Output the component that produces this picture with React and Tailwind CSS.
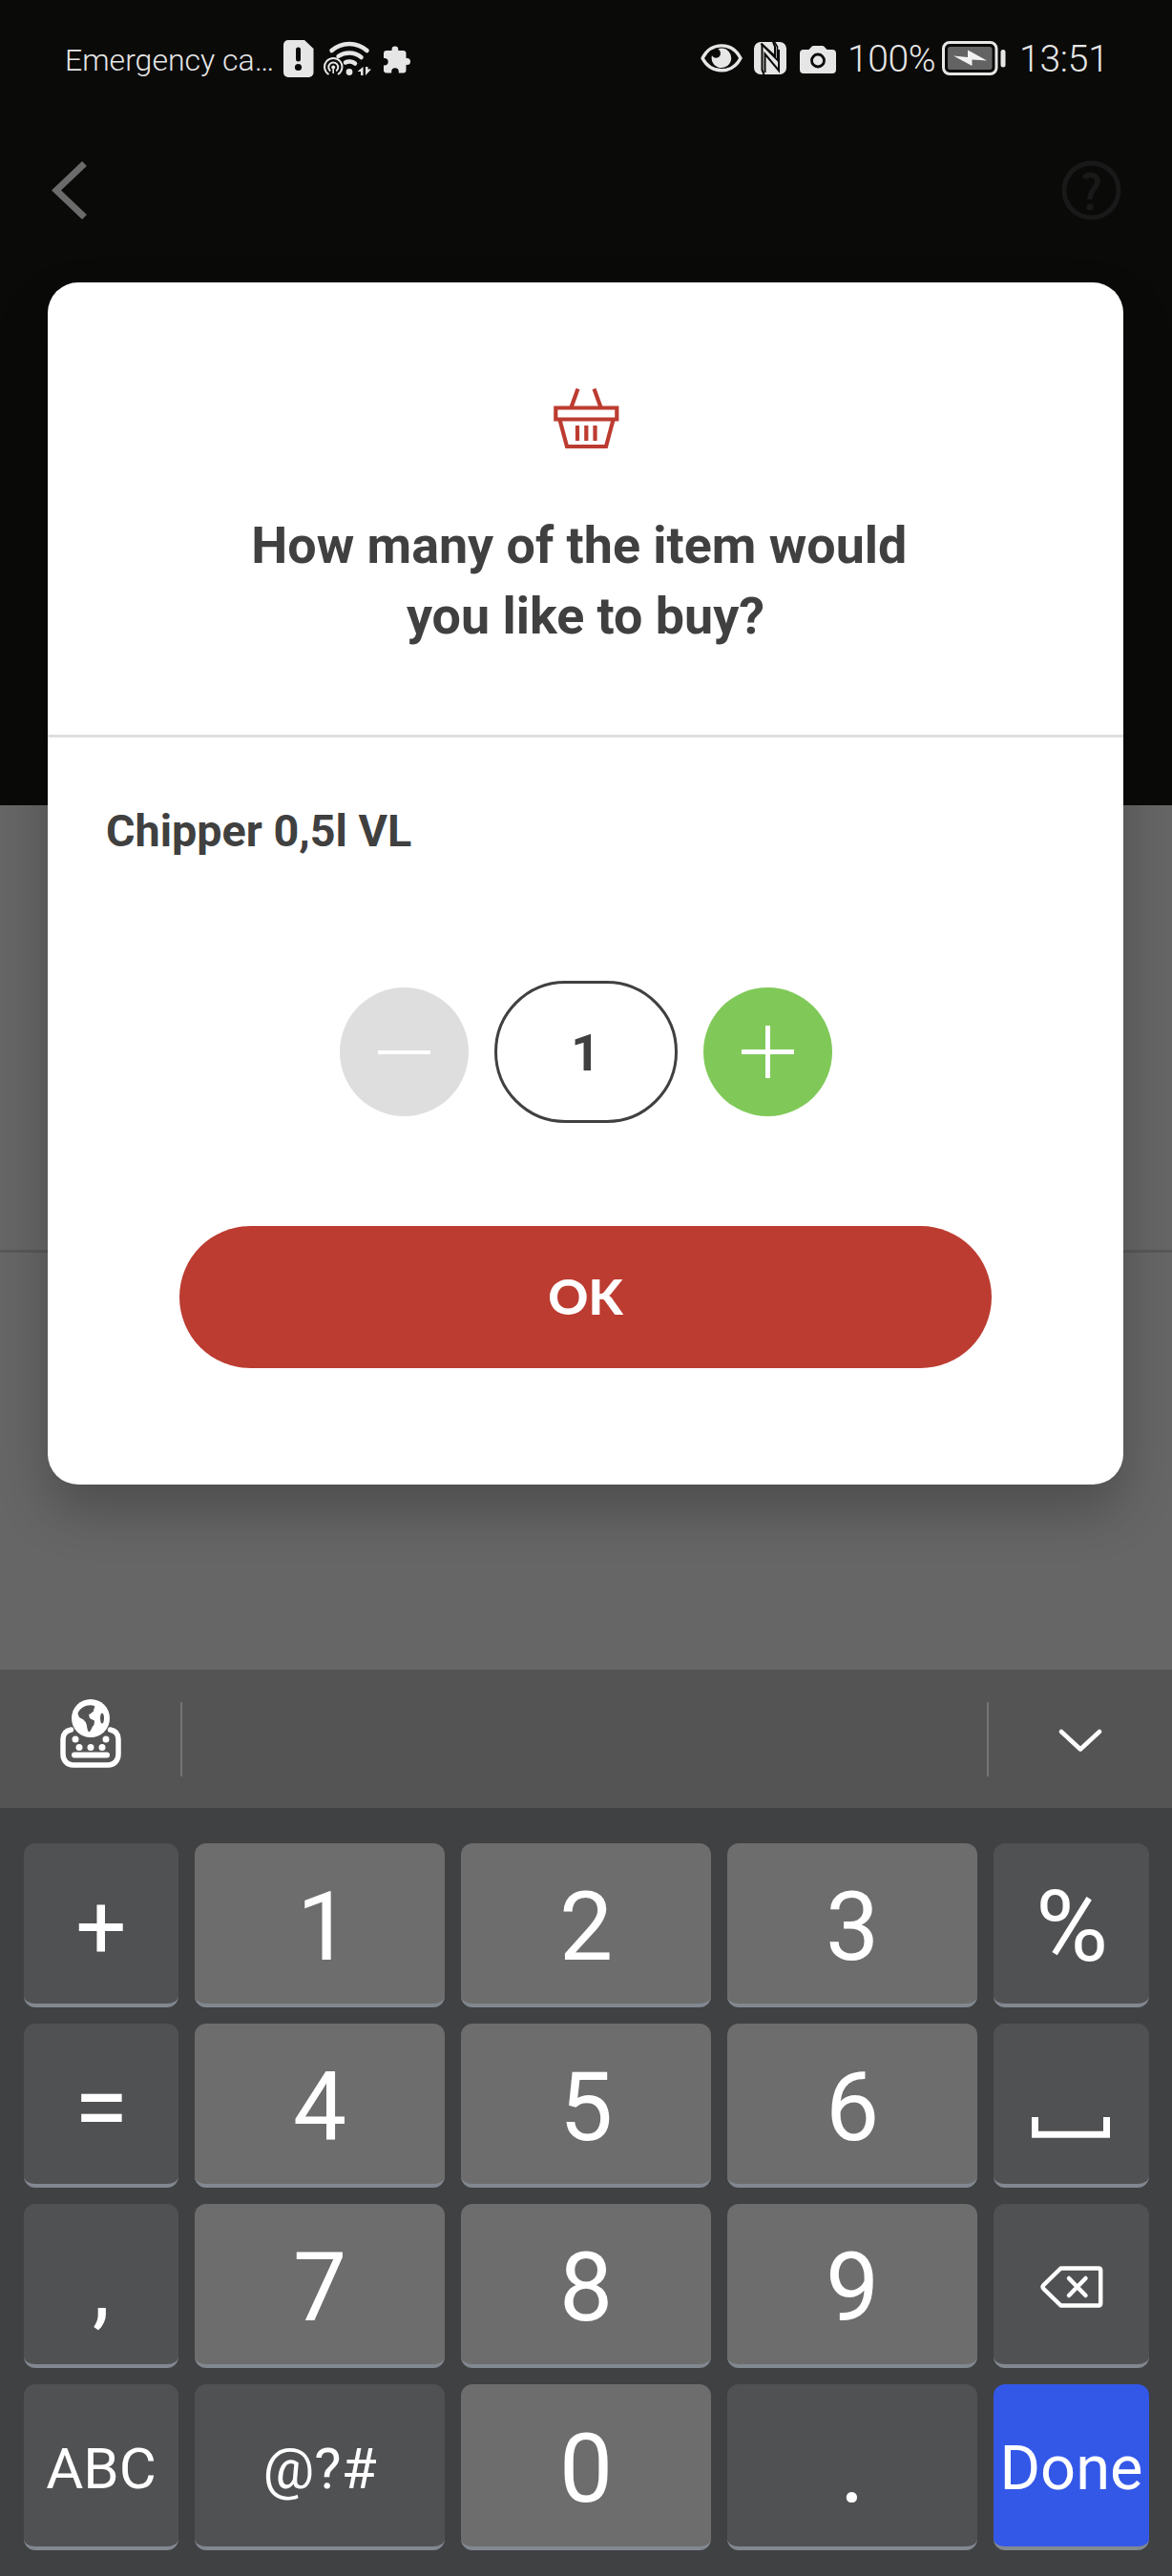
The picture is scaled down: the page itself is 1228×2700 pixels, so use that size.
import React from "react";

function SimAlertIcon() {
  return (
    <svg width="32" height="39" viewBox="0 0 32 39">
      <path d="M5 0H22L31.500 9V34A5 5 0 0 1 26.500 39H5A5 5 0 0 1 0 34V5A5 5 0 0 1 5 0Z" fill="#e6e6e6" />
      <path d="M15.500 10V20" stroke="#0a0a09" strokeWidth="5" strokeLinecap="round" />
      <circle cx="15.500" cy="28.500" r="3.600" fill="#0a0a09" />
    </svg>
  );
}

function WifiIcon() {
  return (
    <svg width="50" height="37" viewBox="0 0 50 37" fill="none" stroke="#e6e6e6">
      <path d="M8.500 10C19 0.500 35 0.500 45.500 10" strokeWidth="4.500" strokeLinecap="round" />
      <path d="M15.500 16C22 11.500 32 11 39.500 17" strokeWidth="4.500" strokeLinecap="round" />
      <path d="M23 22.500C25.500 21 30 21 33 23.500" strokeWidth="4.500" strokeLinecap="round" />
      <circle cx="27" cy="32.500" r="3.400" fill="#e6e6e6" stroke="none" />
      <path d="M5.500 35A9.200 9.200 0 1 1 15 35" strokeWidth="2" />
      <path d="M7.300 31.500A5 5 0 1 1 13.200 31.500" strokeWidth="2" />
      <circle cx="10.200" cy="27.500" r="2" fill="#e6e6e6" stroke="none" />
      <path d="M10.200 29V34" strokeWidth="1.600" />
      <path d="M41.500 27V36H39V32H35.500ZM44 36V27H46.500V29.500H50Z" fill="#e6e6e6" stroke="none" />
    </svg>
  );
}

function PuzzleIcon() {
  return (
    <svg width="29" height="29" viewBox="0 0 29 29" fill="#e6e6e6">
      <path d="M3 5H8.500V4A3.400 3.400 0 0 1 15.300 4V5H20.500A3 3 0 0 1 23.500 8V13H24.500A3.500 3.500 0 0 1 24.500 20H23.500V25.500A3 3 0 0 1 20.500 28.500H15.800V27A3.800 3.800 0 0 0 8.200 27V28.500H3A3 3 0 0 1 0 25.500V20.500H1.500A3.800 3.800 0 0 0 1.500 13H0V8A3 3 0 0 1 3 5Z" />
    </svg>
  );
}

function EyeIcon() {
  return (
    <svg width="44" height="30" viewBox="0 0 44 30">
      <path d="M2 15C11 -2.500 33 -2.500 42 15C33 32 11 32 2 15Z" fill="none" stroke="#e6e6e6" strokeWidth="3.400" strokeLinejoin="round" />
      <path d="M22 4.500A10.300 10.300 0 1 1 12 12C13.500 15.500 19 15.500 20.500 12C21.500 9 20.500 6 18 5.200Z" fill="#e6e6e6" />
    </svg>
  );
}

function NfcIcon() {
  return (
    <svg width="34" height="34" viewBox="0 0 34 34">
      <rect width="34" height="34" rx="7" fill="#e6e6e6" />
      <path d="M8.500 3V29.500L10.500 34" fill="none" stroke="#0a0a09" strokeWidth="2" />
      <path d="M7.500 1.500L22 15V5L20 0" fill="none" stroke="#0a0a09" strokeWidth="2" />
      <path d="M7.500 2L24.500 19V5L21.500 0" fill="none" stroke="#0a0a09" strokeWidth="1.600" />
      <path d="M11.500 32V12.500L26 30V8" fill="none" stroke="#0a0a09" strokeWidth="2" />
    </svg>
  );
}

function CameraIcon() {
  return (
    <svg width="38" height="29" viewBox="0 0 38 29">
      <path d="M4 4H9.500L12.500 0.800Q13.200 0 14.500 0H23.500Q24.800 0 25.500 0.800L28.500 4H34A4 4 0 0 1 38 8V25A4 4 0 0 1 34 29H4A4 4 0 0 1 0 25V8A4 4 0 0 1 4 4Z" fill="#e6e6e6" />
      <circle cx="19" cy="15.500" r="6.500" fill="none" stroke="#0a0a09" strokeWidth="2.800" />
    </svg>
  );
}

function BatteryIcon() {
  return (
    <svg width="68" height="36" viewBox="0 0 68 36">
      <rect x="1.500" y="1.500" width="55.500" height="33" rx="6.500" fill="none" stroke="#e6e6e6" strokeWidth="3" />
      <rect x="6" y="6" width="46.500" height="24" rx="2.500" fill="#636363" />
      <path d="M12 15.500L27 17V9.500L47 20.500L31.500 19.500V26Z" fill="#f2f2f2" />
      <rect x="61.500" y="9" width="5" height="18.500" rx="2.500" fill="#e6e6e6" />
    </svg>
  );
}

function StatusBar() {
  return (
    <div className="flex h-[122px] items-center text-[#e6e6e6]">
      <span className="ml-[68px] w-[229px] pt-[3px] text-[32px] font-light whitespace-nowrap">Emergency ca…</span>
      <SimAlertIcon />
      <div className="ml-[10px]"><WifiIcon /></div>
      <div className="ml-[13px] pt-[2px]"><PuzzleIcon /></div>
      <div className="ml-[303px]"><EyeIcon /></div>
      <div className="ml-[12px]"><NfcIcon /></div>
      <div className="ml-[14px] pt-[2px]"><CameraIcon /></div>
      <span className="ml-[12px] w-[99px] pt-[3px] text-[39px] font-light tracking-[-0.4px] whitespace-nowrap">100%</span>
      <BatteryIcon />
      <span className="ml-[13px] pt-[3px] text-[39px] font-light tracking-[-0.2px] whitespace-nowrap">13:51</span>
    </div>
  );
}

function AppHeader() {
  return (
    <header className="h-[844px] bg-[#0a0a09]">
      <StatusBar />
      <div className="flex justify-between pt-[46px] pr-[53px] pl-[54px]">
        <svg width="38" height="63" viewBox="0 0 38 63" fill="none" stroke="#6b6b6b" strokeWidth="7">
          <path d="M34.500 3.500L5 31.500L34.500 59.500" />
        </svg>
        <svg width="63" height="63" viewBox="0 0 63 63" fill="none" stroke="#191919">
          <circle cx="31.500" cy="31.500" r="28.500" strokeWidth="5" />
          <path d="M24 19C27 14 38 13.500 38 22C38 29 30 30 30 41" strokeWidth="5.500" />
          <circle cx="30" cy="49" r="3.600" fill="#191919" stroke="none" />
        </svg>
      </div>
    </header>
  );
}

function BasketIcon() {
  return (
    <svg width="69" height="64" viewBox="0 0 69 64" fill="none" stroke="#bc3c31" strokeWidth="4.200">
      <path d="M25.500 0.500L18.500 20M42.500 0.500L49.500 20" />
      <path d="M2.300 20.500H66.300V32.500H2.300Z" />
      <path d="M6.500 33L14 61H55L62.500 33" />
      <path d="M25 39V55M34.300 39V55M43.500 39V55" />
    </svg>
  );
}

function QuantityModal() {
  return (
    <div className="flex h-[1260px] w-[1127px] flex-col rounded-[32px] bg-white text-[#404040] shadow-[0_28px_54px_rgba(0,0,0,0.24)]">
      <div className="flex h-[477px] flex-col items-center border-b-[3px] border-[#dedede] pt-[111px]">
        <div className="ml-[2px]"><BasketIcon /></div>
        <h1 className="mt-[64px] text-center text-[53.800px] leading-[74px] font-bold whitespace-nowrap">
          How many of the item would&nbsp;
          <br />
          you like to buy?
        </h1>
      </div>
      <p className="mt-[70px] ml-[61px] text-[46.700px] leading-[56px] font-bold">Chipper 0,5l VL</p>
      <div className="mt-[129px] flex items-center justify-center gap-[27px]">
        <button className="flex size-[135px] items-center justify-center rounded-full bg-[#dedede]">
          <span className="h-[4px] w-[55px] bg-white" />
        </button>
        <div className="flex h-[149px] w-[192px] items-center justify-center rounded-full border-[3px] border-[#404040] pt-[5px] text-[53px] font-bold">1</div>
        <button className="flex size-[135px] items-center justify-center rounded-full bg-[#80c959]">
          <svg width="55" height="55" viewBox="0 0 55 55" stroke="#ffffff" strokeWidth="5">
            <path d="M0 27.500H55M27.500 0V55" />
          </svg>
        </button>
      </div>
      <button className="mx-auto mt-[108px] flex h-[149px] w-[851px] items-center justify-center rounded-full bg-[#bc3c31] pb-[3px] font-['Lato',sans-serif] text-[52px] font-black text-white">
        OK
      </button>
    </div>
  );
}

function GlobeKeyboardIcon() {
  return (
    <svg width="64" height="74" viewBox="0 0 64 74" fill="none" stroke="#ffffff">
      <path d="M11.500 33C6 34 3 37.500 3 43V58.500C3 66 8 70 13.500 70H50.500C56 70 61 66 61 58.500V43C61 37.500 58 34 52.500 33" strokeWidth="5.500" strokeLinecap="round" />
      <circle cx="32" cy="21" r="20" fill="#ffffff" stroke="none" />
      <path d="M18.500 16C21 9 30 5.500 36 8C37 10 34.500 11.500 35 14C33 14.500 32.500 16.500 30 17L31 21L36 23.500L35.500 28C33 30 33 34 30 35.500C28 33 28.500 29 27 25.500L24.500 22.500L20 20Z" fill="#545454" stroke="none" />
      <ellipse cx="44" cy="21" rx="2" ry="5.500" fill="#545454" stroke="none" />
      <g fill="#ffffff" stroke="none">
        <circle cx="16" cy="43" r="3.500" />
        <circle cx="48" cy="43" r="3.500" />
        <circle cx="20" cy="51.500" r="3.500" />
        <circle cx="32" cy="51.500" r="3.500" />
        <circle cx="44" cy="51.500" r="3.500" />
      </g>
      <path d="M15 59.500H49" strokeWidth="6" strokeLinecap="round" />
    </svg>
  );
}

function KeyboardToolbar() {
  return (
    <div className="flex h-[145px] items-center bg-[#545454]">
      <div className="flex w-[189px] justify-center pb-[11px]"><GlobeKeyboardIcon /></div>
      <div className="h-[78px] w-[2px] bg-[#747474]" />
      <div className="w-[843px]" />
      <div className="h-[78px] w-[2px] bg-[#747474]" />
      <div className="flex flex-1 justify-center pt-[4px]">
        <svg width="46" height="25" viewBox="0 0 46 25" fill="none" stroke="#ffffff" strokeWidth="4.500" strokeLinecap="round" strokeLinejoin="round">
          <path d="M3 3L23 21.500L43 3" />
        </svg>
      </div>
    </div>
  );
}

function SpaceIcon() {
  return (
    <svg className="mt-[42px] mr-[2px]" width="82" height="22" viewBox="0 0 82 22" fill="none" stroke="#ffffff" strokeWidth="7">
      <path d="M3.500 0V18.200H78.500V0" />
    </svg>
  );
}

function BackspaceIcon() {
  return (
    <svg className="mb-[2px]" width="66" height="44" viewBox="0 0 66 44" fill="none" stroke="#ffffff" strokeWidth="4.500" strokeLinejoin="round" strokeLinecap="round">
      <path d="M21.500 2.500H61Q63.200 2.500 63.200 4.700V39.300Q63.200 41.500 61 41.500H21.500L3.500 24Q1.500 22 3.500 20Z" />
      <path d="M30 13L47.500 31M47.500 13L30 31" />
    </svg>
  );
}

const DIGIT = "bg-[#6d6d6d] text-[100px]";
const SYMBOL = "bg-[#505153] text-[100px]";

const ROWS = [
  [
    { tone: "bg-[#505153] text-[94px]", label: "+" },
    { tone: "bg-[#6d6d6d] text-[100px] pl-[8px]", label: "1" },
    { tone: DIGIT, label: "2" },
    { tone: DIGIT, label: "3" },
    { tone: "bg-[#505153] text-[104px] tracking-[-1px]", label: "%" },
  ],
  [
    { tone: "bg-[#505153] text-[104px]", label: "=" },
    { tone: DIGIT, label: "4" },
    { tone: DIGIT, label: "5" },
    { tone: DIGIT, label: "6" },
    { tone: SYMBOL, label: <SpaceIcon /> },
  ],
  [
    { tone: "bg-[#505153] text-[92px]", label: "," },
    { tone: DIGIT, label: "7" },
    { tone: DIGIT, label: "8" },
    { tone: DIGIT, label: "9" },
    { tone: SYMBOL, label: <BackspaceIcon /> },
  ],
  [
    { tone: "bg-[#505153] text-[60px]", label: "ABC" },
    { tone: "bg-[#505153] text-[60px]", label: "@?#" },
    { tone: DIGIT, label: "0" },
    { tone: SYMBOL, label: "." },
    { tone: "bg-[#3358e7] text-[65px]", label: "Done" },
  ],
];

function Keyboard() {
  return (
    <div className="h-[805px] bg-[#404143] pt-[37px] pl-[25px]">
      <div className="grid grid-cols-[162px_262px_262px_262px_163px] grid-rows-[172px_172px_172px_174px] gap-[17px]">
        {ROWS.flat().map((key, i) => (
          <button
            key={i}
            className={`flex items-center justify-center overflow-hidden rounded-[12px] border-b-[4px] border-[#828890] pt-[7px] leading-none whitespace-nowrap text-white ${key.tone}`}
          >
            {key.label}
          </button>
        ))}
      </div>
    </div>
  );
}

export default function App() {
  return (
    <div className="flex h-[2700px] w-[1228px] flex-col overflow-hidden bg-[#666666] font-['Roboto',sans-serif]">
      <div className="relative h-[1750px] overflow-hidden">
        <AppHeader />
        <div className="h-[469px] border-b-[3px] border-[#585858]" />
        <div className="absolute inset-0 pt-[296px] pl-[50px]">
          <QuantityModal />
        </div>
      </div>
      <KeyboardToolbar />
      <Keyboard />
    </div>
  );
}
